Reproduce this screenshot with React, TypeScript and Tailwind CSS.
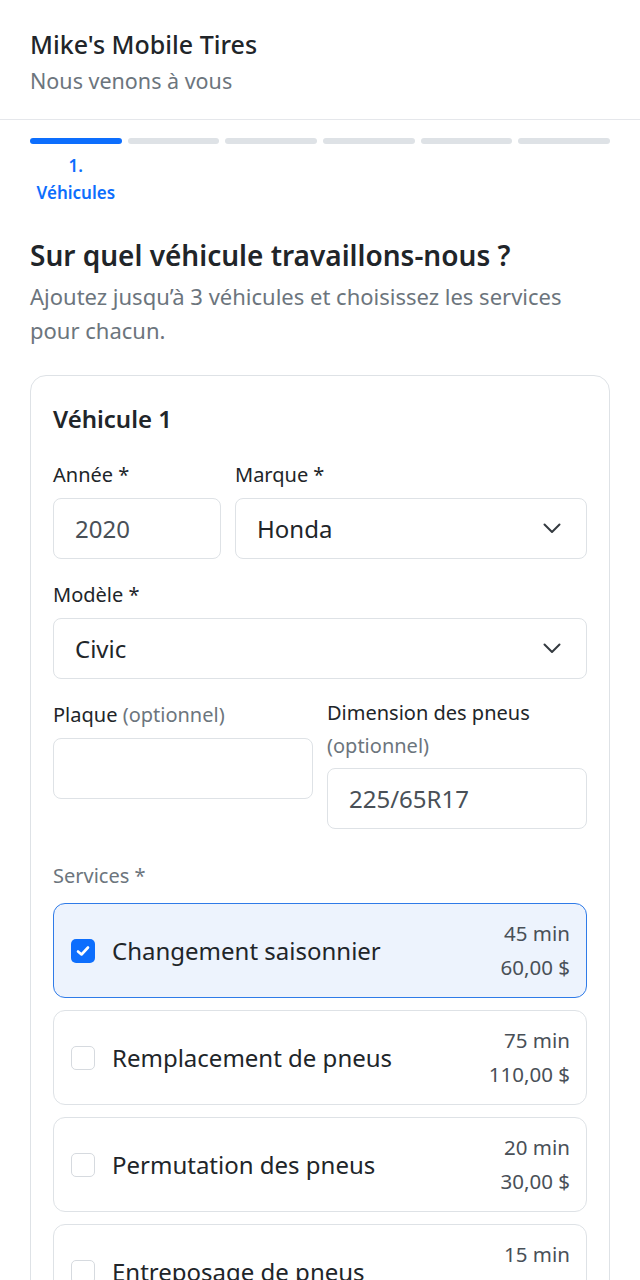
import React from "react";

const font = { fontFamily: '"Noto Sans", "Open Sans", sans-serif' };

function Chevron() {
  return (
    <svg width="18" height="11" viewBox="0 0 18 11" fill="none" className="shrink-0">
      <path d="M1.5 1.5 L9 9 L16.5 1.5" stroke="#343a40" strokeWidth="2" strokeLinecap="round" strokeLinejoin="round" />
    </svg>
  );
}

function Label({ children }: { children: React.ReactNode }) {
  return <div className="text-[20px] leading-[32px] text-[#212529] mb-[7px]">{children}</div>;
}

function Input({ value, className = "" }: { value?: string; className?: string }) {
  return (
    <div className={"h-[61px] rounded-[8px] border border-[#dee2e6] bg-white flex items-center px-[21px] text-[24px] text-[#495057] " + className}>
      {value}
    </div>
  );
}

function Select({ value }: { value: string }) {
  return (
    <div className="h-[61px] rounded-[8px] border border-[#dee2e6] bg-white flex items-center justify-between pl-[21px] pr-[25px] text-[24px] text-[#212529]">
      <span>{value}</span>
      <Chevron />
    </div>
  );
}

const services = [
  { name: "Changement saisonnier", time: "45 min", price: "60,00 $", checked: true },
  { name: "Remplacement de pneus", time: "75 min", price: "110,00 $", checked: false },
  { name: "Permutation des pneus", time: "20 min", price: "30,00 $", checked: false },
  { name: "Entreposage de pneus", time: "15 min", price: "40,00 $", checked: false },
];

function Service({ s }: { s: (typeof services)[number] }) {
  return (
    <div
      className={
        "rounded-[12px] flex items-center justify-between pl-[17px] pr-[16px] py-[13px] " +
        (s.checked ? "border-[1.5px] border-[#2f7be8] bg-[#edf3fd]" : "border border-[#dee2e6] bg-white")
      }
    >
      <div className="flex items-center gap-[17px]">
        {s.checked ? (
          <div className="w-[24px] h-[24px] rounded-[5px] bg-[#0d6efd] flex items-center justify-center">
            <svg width="14" height="12" viewBox="0 0 14 12" fill="none">
              <path d="M2 6.5 L5.5 9.5 L12 2.5" stroke="white" strokeWidth="2.6" strokeLinecap="round" strokeLinejoin="round" />
            </svg>
          </div>
        ) : (
          <div className="w-[24px] h-[24px] rounded-[5px] border border-[#d6dadf] bg-white" />
        )}
        <span className="text-[24px] text-[#212529]">{s.name}</span>
      </div>
      <div className="text-right text-[20.5px] leading-[33.5px] text-[#495057]">
        <div>{s.time}</div>
        <div>{s.price}</div>
      </div>
    </div>
  );
}

export default function App() {
  return (
    <div className="bg-white min-h-[1280px] text-[#212529]" style={font}>
      <header className="px-[30px] pt-[26px] pb-[22px] border-b border-[#e5e7eb]">
        <div className="text-[25px] leading-[36px] font-medium text-[#212529]">Mike's Mobile Tires</div>
        <div className="text-[21.5px] leading-[32px] mt-[3px] text-[#6c757d]">Nous venons à vous</div>
      </header>

      <div className="px-[30px]">
        <div className="pt-[18px] grid grid-cols-6 gap-[6px]">
          {[0, 1, 2, 3, 4, 5].map((i) => (
            <div key={i} className="flex flex-col items-center">
              <div className={"h-[6px] w-full rounded-full " + (i === 0 ? "bg-[#0d6efd]" : "bg-[#dee2e6]")} />
              {i === 0 && (
                <div className="mt-[8px] text-center text-[17px] leading-[27px] font-semibold text-[#0d6efd]">
                  <div>1.</div>
                  <div>Véhicules</div>
                </div>
              )}
            </div>
          ))}
        </div>

        <h2 className="mt-[31px] text-[28px] leading-[36px] font-semibold text-[#212529]">Sur quel véhicule travaillons-nous ?</h2>
        <p className="mt-[6px] text-[22px] leading-[34px] text-[#6c757d] pr-[20px]">
          Ajoutez jusqu’à 3 véhicules et choisissez les services pour chacun.
        </p>

        <div className="mt-[28px] rounded-[16px] border border-[#dee2e6] px-[22px] pt-[27px] pb-[24px]">
          <div className="text-[24px] leading-[32px] font-semibold">Véhicule 1</div>

          <div className="mt-[24px] flex gap-[14px]">
            <div className="w-[168px]">
              <Label>Année *</Label>
              <Input value="2020" />
            </div>
            <div className="flex-1">
              <Label>Marque *</Label>
              <Select value="Honda" />
            </div>
          </div>

          <div className="mt-[20px]">
            <Label>Modèle *</Label>
            <Select value="Civic" />
          </div>

          <div className="mt-[20px] grid grid-cols-2 gap-[14px] items-start">
            <div>
              <Label>
                Plaque <span className="text-[#6c757d]">(optionnel)</span>
              </Label>
              <Input />
            </div>
            <div className="-mt-[3px]">
              <div className="text-[20px] leading-[33px] text-[#212529] mb-[6px]">
                Dimension des pneus <span className="text-[#6c757d]">(optionnel)</span>
              </div>
              <Input value="225/65R17" />
            </div>
          </div>

          <div className="mt-[31px] text-[20px] leading-[32px] text-[#6c757d] mb-[11px]">Services *</div>
          <div className="flex flex-col gap-[12px]">
            {services.map((s) => (
              <Service key={s.name} s={s} />
            ))}
          </div>
        </div>
      </div>
    </div>
  );
}
